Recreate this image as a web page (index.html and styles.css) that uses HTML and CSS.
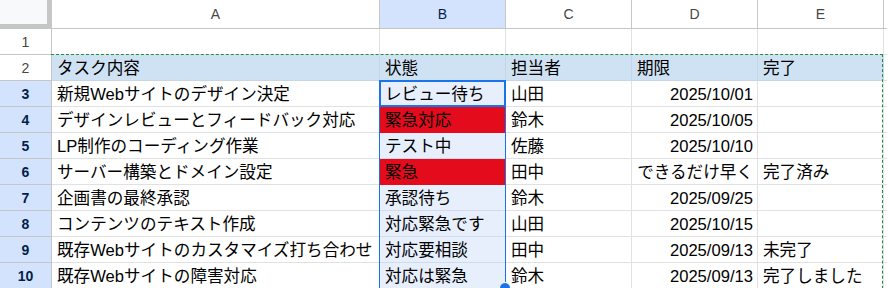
FILE: index.html
```html
<!DOCTYPE html>
<html lang="ja">
<head>
    <meta charset="UTF-8">
    <meta name="viewport" content="width=device-width, initial-scale=1.0">
    <title>タスク管理</title>
    <link rel="stylesheet" href="styles.css">
</head>
<body>
    <div class="sheet">
        <!-- column headers -->
        <div class="corner"></div>
        <div class="col-head">A</div>
        <div class="col-head sel">B</div>
        <div class="col-head">C</div>
        <div class="col-head">D</div>
        <div class="col-head">E</div>
        <div class="col-head"></div>

        <!-- row 1 -->
        <div class="row-head">1</div>
        <div class="cell"></div>
        <div class="cell"></div>
        <div class="cell"></div>
        <div class="cell"></div>
        <div class="cell"></div>
        <div class="cell"></div>

        <!-- row 2: table header -->
        <div class="row-head">2</div>
        <div class="cell hdr">タスク内容</div>
        <div class="cell hdr">状態</div>
        <div class="cell hdr">担当者</div>
        <div class="cell hdr">期限</div>
        <div class="cell hdr">完了</div>
        <div class="cell"></div>

        <div class="row-head sel">3</div>
        <div class="cell">新規Webサイトのデザイン決定</div>
        <div class="cell pick">レビュー待ち</div>
        <div class="cell">山田</div>
        <div class="cell num">2025/10/01</div>
        <div class="cell"></div>
        <div class="cell"></div>

        <div class="row-head sel">4</div>
        <div class="cell">デザインレビューとフィードバック対応</div>
        <div class="cell pick red">緊急対応</div>
        <div class="cell">鈴木</div>
        <div class="cell num">2025/10/05</div>
        <div class="cell"></div>
        <div class="cell"></div>

        <div class="row-head sel">5</div>
        <div class="cell">LP制作のコーディング作業</div>
        <div class="cell pick">テスト中</div>
        <div class="cell">佐藤</div>
        <div class="cell num">2025/10/10</div>
        <div class="cell"></div>
        <div class="cell"></div>

        <div class="row-head sel">6</div>
        <div class="cell">サーバー構築とドメイン設定</div>
        <div class="cell pick red">緊急</div>
        <div class="cell">田中</div>
        <div class="cell num">できるだけ早く</div>
        <div class="cell">完了済み</div>
        <div class="cell"></div>

        <div class="row-head sel">7</div>
        <div class="cell">企画書の最終承認</div>
        <div class="cell pick">承認待ち</div>
        <div class="cell">鈴木</div>
        <div class="cell num">2025/09/25</div>
        <div class="cell"></div>
        <div class="cell"></div>

        <div class="row-head sel">8</div>
        <div class="cell">コンテンツのテキスト作成</div>
        <div class="cell pick">対応緊急です</div>
        <div class="cell">山田</div>
        <div class="cell num">2025/10/15</div>
        <div class="cell"></div>
        <div class="cell"></div>

        <div class="row-head sel">9</div>
        <div class="cell">既存Webサイトのカスタマイズ打ち合わせ</div>
        <div class="cell pick">対応要相談</div>
        <div class="cell">田中</div>
        <div class="cell num">2025/09/13</div>
        <div class="cell">未完了</div>
        <div class="cell"></div>

        <div class="row-head sel">10</div>
        <div class="cell">既存Webサイトの障害対応</div>
        <div class="cell pick">対応は緊急</div>
        <div class="cell">鈴木</div>
        <div class="cell num">2025/09/13</div>
        <div class="cell">完了しました</div>
        <div class="cell"></div>

        <!-- overlays: copy marquee, selected range, active cell, fill handle -->
        <div class="marquee"></div>
        <div class="range"></div>
        <div class="active"></div>
        <div class="handle"></div>
    </div>
</body>
</html>
```

FILE: styles.css
```css
/* Spreadsheet grid */
html, body {
    margin: 0;
    padding: 0;
    background-color: #fff;
    overflow: hidden;
}

.sheet {
    position: relative;
    display: grid;
    grid-template-columns: 52px 328px 126px 126px 126px 126px 20px;
    grid-template-rows: 29px repeat(10, 26px);
    height: 288px;
    overflow: hidden;
    font-family: "Liberation Sans", "Noto Sans CJK JP", sans-serif;
}

.sheet > div {
    box-sizing: border-box;
}

/* Headers */
.corner {
    background-color: #f8f9fa;
    border-right: 5px solid #c4c7c5;
    border-bottom: 5px solid #c4c7c5;
}

.col-head {
    display: flex;
    align-items: center;
    justify-content: center;
    font-size: 14px;
    color: #444746;
    background-color: #fff;
    border-right: 1px solid #c4c7c5;
    border-bottom: 1px solid #c4c7c5;
}

.col-head.sel {
    background-color: #d3e3fd;
    color: #041e49;
}

.row-head {
    display: flex;
    align-items: center;
    justify-content: center;
    font-size: 14px;
    color: #444746;
    background-color: #fff;
    border-right: 1px solid #c4c7c5;
    border-bottom: 1px solid #c4c7c5;
}

.row-head.sel {
    background-color: #d3e3fd;
    color: #041e49;
    font-weight: bold;
}

/* Cells */
.cell {
    display: flex;
    align-items: flex-end;
    padding: 0 4px 1px 5px;
    font-size: 16.6px;
    line-height: 20px;
    color: #000;
    white-space: nowrap;
    overflow: hidden;
    border-right: 1px solid #e1e1e1;
    border-bottom: 1px solid #e1e1e1;
}

.cell.hdr {
    background-color: #cfe2f3;
    border-right-color: #c6d6e4;
    border-bottom-color: #c6d6e4;
}

.cell.num {
    justify-content: flex-end;
}

.cell.pick {
    background-color: #e7effd;
    border-bottom-color: #d2dbea;
}

.cell.red {
    background-color: #e30b1c;
    border-bottom-color: #e30b1c;
}

/* Overlays */
.marquee {
    position: absolute;
    left: 51px;
    top: 54px;
    width: 832px;
    height: 260px;
    border-top: 1px dashed #1e8e3e;
    border-right: 1px dashed #1e8e3e;
    pointer-events: none;
}

.range {
    position: absolute;
    left: 379px;
    top: 80px;
    width: 127px;
    height: 209px;
    border: 1px solid #1a73e8;
    pointer-events: none;
}

.active {
    position: absolute;
    left: 379px;
    top: 80px;
    width: 127px;
    height: 27px;
    border: 2px solid #1a73e8;
    pointer-events: none;
}

.handle {
    position: absolute;
    left: 499px;
    top: 282px;
    width: 12px;
    height: 12px;
    border-radius: 50%;
    background-color: #1a73e8;
    border: 1px solid #fff;
}
```
